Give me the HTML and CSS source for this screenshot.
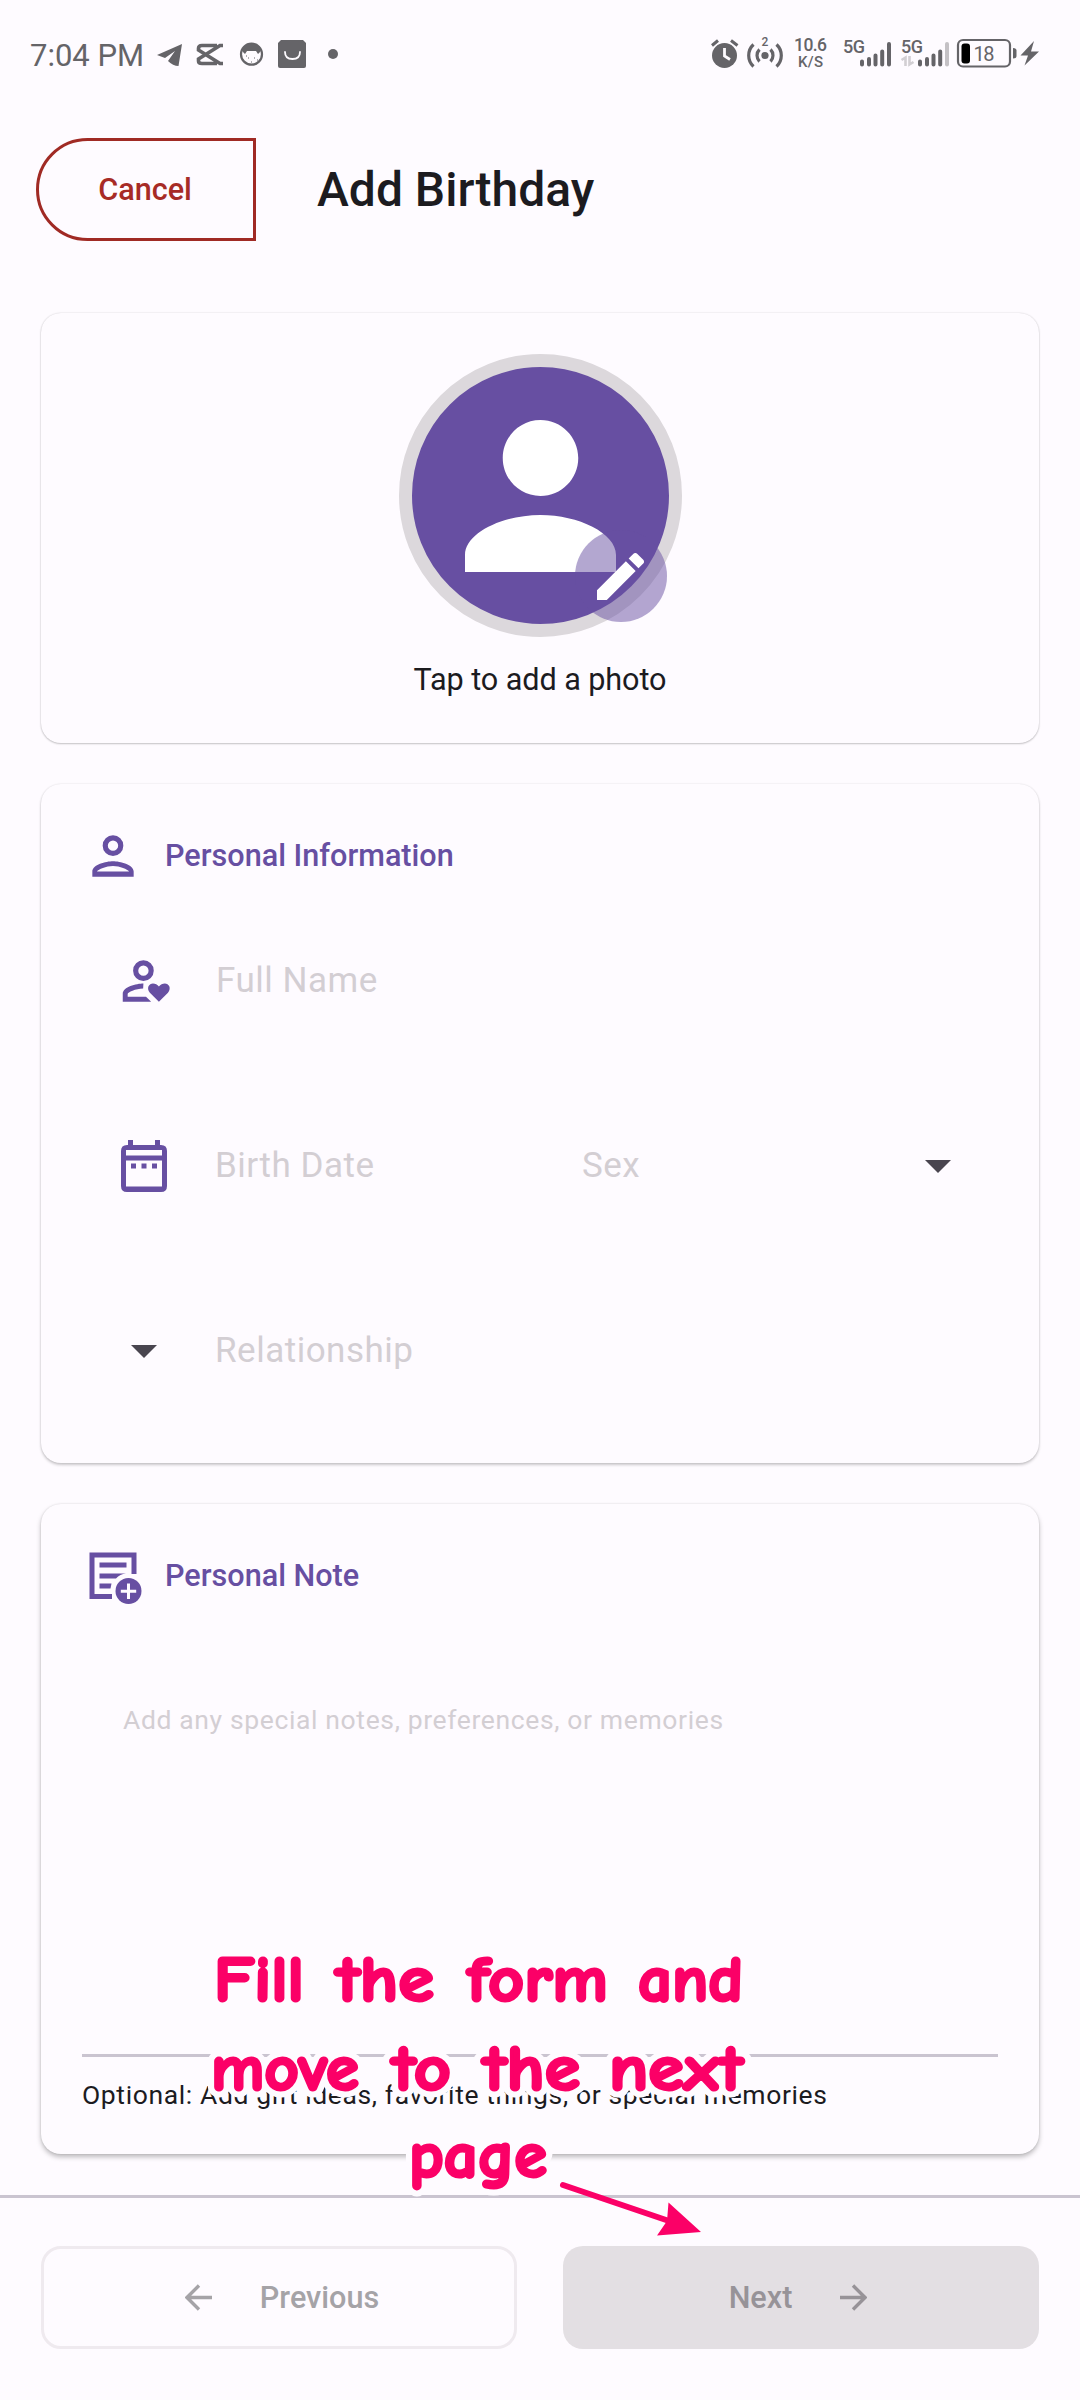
FILE: index.html
```html
<!DOCTYPE html>
<html lang="en">
<head>
<meta charset="utf-8">
<title>Add Birthday</title>
<link rel="stylesheet" href="styles.css">
</head>
<body>
<div class="screen">
  <div class="status">
    <span class="clock">7:04 PM</span>
    <svg class="status-left" width="190" height="36" viewBox="150 34 190 36">
      <path d="M157 54 182 43 178.500 65Q173 65 168 60L175 50 165 57Z"/>
      <path d="M217 44.500H202Q198.500 44.500 198.500 47.500V49L220 62.500H223M223 44.500H220L198.500 58V60Q198.500 62.500 202 62.500H217" fill="none" stroke="currentColor" stroke-width="3.600"/>
      <circle cx="251.500" cy="53.200" r="10.500" fill="none" stroke="currentColor" stroke-width="2.200"/>
      <path d="M242 50Q243 43 251.500 42.500 260 43 261 50L258 53 256 50H247L245 53Z"/>
      <path d="M248 57h1M254 57h1M251 61h1M246 55h1M257 59h1" stroke="currentColor"/>
      <path d="M281 39h22l3 3V65q0 2-2 2H280q-2 0-2-2V42Z"/>
      <path d="M285 51q0 7 7.500 7t7.500-7" fill="none" stroke="#fefbff" stroke-width="1.800" stroke-linecap="round"/>
      <circle cx="333" cy="53" r="5"/>
    </svg>
    <svg class="status-right" width="340" height="44" viewBox="705 31 340 44">
      <circle cx="724.500" cy="55.500" r="12.500"/>
      <path d="M712 45.500 718 40.500M731 40.500 737.500 45.500" stroke="currentColor" stroke-width="3"/>
      <path d="M724.500 48V56L730 59.500" fill="none" stroke="#fefbff" stroke-width="2.800"/>
      <circle cx="765" cy="55.500" r="3.600"/>
      <path d="M759.500 49.500a8.500 8.500 0 0 0 0 12M770.500 49.500a8.500 8.500 0 0 1 0 12M753.500 44.500a15 15 0 0 0 0 22M776.500 44.500a15 15 0 0 1 0 22" fill="none" stroke="currentColor" stroke-width="3.200"/>
      <text x="765" y="46" font-size="12" text-anchor="middle" font-weight="500">2</text>
      <text x="810.500" y="50.500" font-size="17.500" text-anchor="middle" font-weight="500" textLength="33">10.6</text>
      <text x="810.500" y="66.500" font-size="15" text-anchor="middle" font-weight="500" textLength="25">K/S</text>
      <text x="843" y="53" font-size="18" font-weight="500" textLength="22">5G</text>
      <text x="901" y="53" font-size="18" font-weight="500" textLength="22">5G</text>
      <path d="M862 61.500V64.500M869 59V64.500M875.500 55.500V64.500M882.200 51.500V64.500M889 44V64.500M920 61.500V64.500M927 59V64.500M933.500 55.500V64.500M940.200 51.500V64.500" stroke="currentColor" stroke-width="4" stroke-linecap="round"/>
      <path d="M947 44V64.500" stroke="#c4c1c5" stroke-width="4" stroke-linecap="round"/>
      <path d="M901.500 60 905.500 57.500V66M909.500 56V64.500L913.500 62" fill="none" stroke="#d2cfd3" stroke-width="2.600"/>
      <rect x="958" y="40" width="52" height="26.500" rx="5" fill="none" stroke="currentColor" stroke-width="2.200"/>
      <rect x="961.500" y="43.500" width="8.500" height="20" rx="3" fill="#000"/>
      <text x="973.500" y="60.500" font-size="20" textLength="21">18</text>
      <path d="M1013 48Q1016.500 48 1016.500 50.500V56Q1016.500 58.500 1013 58.500Z"/>
      <path d="M1034 41 1020.500 55.500H1028L1024.500 65.500 1039 51.500H1031Z"/>
    </svg>
  </div>

  <header class="appbar">
    <button class="cancel">Cancel</button>
    <h1 class="title">Add Birthday</h1>
  </header>

  <main class="cards">
    <section class="card photo">
      <div class="avatar">
        <svg class="avatar-person" viewBox="4 4 16 16" preserveAspectRatio="none"><path d="M12 12c2.210 0 4-1.790 4-4s-1.790-4-4-4-4 1.790-4 4 1.790 4 4 4zm0 2c-4 0-8 1.900-8 4.200V20h16v-1.800c0-2.300-4-4.200-8-4.200z"/></svg>
        <div class="badge">
          <svg class="pencil" viewBox="3 3 18 18"><path d="M3 17.250V21h3.750L17.810 9.940l-3.750-3.750L3 17.250zM20.710 7.040c.39-.39.39-1.020 0-1.410l-2.340-2.340c-.39-.39-1.020-.39-1.410 0l-1.830 1.830 3.750 3.750 1.830-1.830z"/></svg>
        </div>
      </div>
      <p class="photo-label">Tap to add a photo</p>
    </section>

    <section class="card info">
      <h2 class="heading">
        <svg class="heading-icon" viewBox="0 0 24 24"><path d="M12 4a4 4 0 1 0 0 8 4 4 0 0 0 0-8zm0 2a2 2 0 1 1 0 4 2 2 0 0 1 0-4zM12 14c-2.700 0-8 1.300-8 4v2h16v-2c0-2.700-5.300-4-8-4zm-6.200 4c.6-.8 3.500-2.100 6.200-2.100s5.600 1.300 6.200 2.100z" fill-rule="evenodd"/></svg>
        <span>Personal Information</span>
      </h2>
      <div class="field name-field">
        <svg class="field-icon" viewBox="0 0 24 24"><path d="M11 4a4 4 0 1 0 0 8 4 4 0 0 0 0-8zm0 2a2 2 0 1 1 0 4 2 2 0 0 1 0-4zM11 13c-2.700 0-8 1.300-8 4v3h11l-2-1.900H4.900V17c0-.6 3.100-2.100 6-2.100zM17 20l-3.500-3.500c-1.500-1.700-.3-3.500 1.200-3.500.9 0 1.700.4 2.300 1.100.6-.7 1.400-1.100 2.300-1.100 1.500 0 2.700 1.800 1.200 3.500z" fill-rule="evenodd"/></svg>
        <span>Full Name</span>
      </div>
      <div class="pair">
        <div class="field">
          <svg class="field-icon calendar" viewBox="0 0 46 52"><path d="M7 0h5v5h22V0h5v5h1q6 0 6 6v35q0 6-6 6H6q-6 0-6-6V11Q0 5 6 5h1zM5 10v5.500h36V10zM5 20.500v26h36v-26zM10 23.500h5v5h-5zM20.500 23.500h5v5h-5zM31 23.500h5v5h-5z" fill-rule="evenodd"/></svg>
          <span>Birth Date</span>
        </div>
        <div class="field select">
          <span>Sex</span>
          <svg class="caret" viewBox="0 0 26 13"><path d="M0 0H26L13 13Z"/></svg>
        </div>
      </div>
      <div class="field">
        <svg class="caret lead" viewBox="0 0 26 13"><path d="M0 0H26L13 13Z"/></svg>
        <span>Relationship</span>
      </div>
    </section>

    <section class="card note">
      <h2 class="heading">
        <svg class="note-icon" viewBox="89 1552 53 52"><path fill-rule="evenodd" d="M89.500 1552.500H136.500V1574H131.500V1557.500H94.500V1594H112V1599H89.500Z"/><path d="M99.500 1562.500H126.500V1567.500H99.500ZM99.500 1573.500H126Q120 1574 116 1578.500H99.500ZM99.500 1583.500H111.500L110.500 1588.500H99.500Z"/><circle cx="128.500" cy="1591" r="13"/><path d="M128.500 1583.500V1599M120.800 1591.300H136.200" stroke="#fefbff" stroke-width="3"/></svg>
        <span>Personal Note</span>
      </h2>
      <div class="note-input">Add any special notes, preferences, or memories</div>
      <p class="hint">Optional: Add gift ideas, favorite things, or special memories</p>
    </section>
  </main>

  <footer class="actions">
    <button class="action previous">
      <svg class="arrow" viewBox="0 0 27 27"><path d="M27 13.500H2.500M14 1.500 2 13.500 14 25.500"/></svg>
      <span>Previous</span>
    </button>
    <button class="action next">
      <span>Next</span>
      <svg class="arrow" viewBox="0 0 27 27"><path d="M0 13.500H24.500M13 1.500 25 13.500 13 25.500"/></svg>
    </button>
  </footer>

  <svg class="annotation" viewBox="190 1930 580 330">
    <use href="#caption" class="halo"/>
    <g class="ink">
      <g id="caption">
        <text y="2001"><tspan x="214" textLength="90" lengthAdjust="spacingAndGlyphs">Fill</tspan> <tspan x="336" textLength="98" lengthAdjust="spacingAndGlyphs">the</tspan> <tspan x="467" textLength="141" lengthAdjust="spacingAndGlyphs">form</tspan> <tspan x="638" textLength="105" lengthAdjust="spacingAndGlyphs">and</tspan></text>
        <text y="2090"><tspan x="211" textLength="148" lengthAdjust="spacingAndGlyphs">move</tspan> <tspan x="392" textLength="59" lengthAdjust="spacingAndGlyphs">to</tspan> <tspan x="483" textLength="97" lengthAdjust="spacingAndGlyphs">the</tspan> <tspan x="609" textLength="134" lengthAdjust="spacingAndGlyphs">next</tspan></text>
        <text y="2177"><tspan x="409" textLength="138" lengthAdjust="spacingAndGlyphs">page</tspan></text>
      </g>
    </g>
    <path class="pointer-line" d="M563 2185 672 2222"/>
    <path class="pointer-head" d="M668.500 2202.500 701 2232 657 2235.500 667 2221Z"/>
  </svg>
</div>
</body>
</html>
```
FILE: styles.css
```css
* { box-sizing: border-box; }

body {
  margin: 0;
  background: #fefbff;
  font-family: Roboto, sans-serif;
  color: #1c1b1f;
}

h1, h2, p { margin: 0; }

button { font-family: inherit; }

svg { display: block; fill: currentColor; flex: none; }

.screen {
  position: relative;
  width: 1080px;
  height: 2400px;
  display: flex;
  flex-direction: column;
  overflow: hidden;
}

.status {
  height: 108px;
  display: flex;
  align-items: center;
  padding: 0 35px 2px 30px;
  color: #656468;
}

.clock {
  width: 120px;
  font-size: 31px;
  white-space: nowrap;
  padding-top: 4px;
}

.status-right { margin-left: auto; }

.appbar {
  height: 163px;
  padding: 30px 36px 0;
  display: flex;
  align-items: flex-start;
  gap: 61px;
}

.cancel {
  width: 220px;
  height: 103px;
  border: 3px solid #a02a24;
  border-radius: 52px 0 0 52px;
  background: transparent;
  color: #a72b26;
  font-size: 30.600px;
  font-weight: 500;
  padding: 0 2px 0 0;
}

.title {
  font-size: 48px;
  line-height: 103px;
  font-weight: 500;
}

.cards {
  padding: 42px 41px 0;
  display: flex;
  flex-direction: column;
  gap: 41px;
}

.card {
  border-radius: 20px;
  background: #fefbff;
  box-shadow: 0 2px 3px rgba(0, 0, 0, .2), 0 0 2px rgba(0, 0, 0, .12);
}

.photo {
  height: 430px;
  padding-top: 41px;
  display: flex;
  flex-direction: column;
  align-items: center;
  box-shadow: 0 1px 2px rgba(0, 0, 0, .2), 0 0 2px rgba(0, 0, 0, .14);
}

.avatar {
  position: relative;
  width: 283px;
  height: 283px;
  border: 13px solid #dcd8dc;
  border-radius: 50%;
  background: #674fa2;
  display: flex;
  justify-content: center;
  padding: 53px 0 0 1px;
}

.avatar-person { width: 151px; height: 152px; color: #fff; }

.badge {
  position: absolute;
  left: 163px;
  top: 163px;
  width: 92px;
  height: 92px;
  border-radius: 50%;
  background: rgba(103, 79, 162, .5);
  display: flex;
  align-items: center;
  justify-content: center;
}

.pencil { width: 47px; height: 47px; color: #fff; }

.photo-label { font-size: 30.600px; line-height: 40px; margin-top: 23px; letter-spacing: -.08px; }

.info { height: 679px; }

.heading {
  height: 144px;
  padding-left: 41px;
  display: flex;
  align-items: center;
  font-size: 30.600px;
  font-weight: 500;
  color: #674fa2;
}

.heading span { padding-bottom: 2px; }

.heading-icon { width: 62px; height: 62px; margin-right: 21px; }

.note-icon { width: 53px; height: 52px; margin: 4px 23px 0 7px; }

.field {
  height: 185px;
  padding-left: 73px;
  display: flex;
  align-items: flex-start;
  font-size: 35px;
  line-height: 42px;
  letter-spacing: .5px;
  color: #d3ced3;
}

.info .field span { flex: none; padding-top: 1px; }

.field-icon {
  width: 62px;
  height: 62px;
  margin: -9px 39px 0 1px;
  color: #674fa2;
}

.pair { display: flex; margin-top: 31px; }

.name-field { padding-top: 31px; }

.calendar { width: 46px; height: 52px; margin: -4px 48px 0 7px; }

.pair .field { width: 500px; }

.pair .select {
  padding: 0 88px 0 41px;
  width: 498px;
  justify-content: space-between;
}

.caret { width: 26px; height: 13px; margin-top: 16px; color: #49454f; }

.lead { margin: 16px 58px 0 17px; }

.note { height: 650px; box-shadow: 0 3px 5px rgba(0, 0, 0, .26), 0 0 2px rgba(0, 0, 0, .12); }

.note-input {
  height: 409px;
  margin: 0 41px;
  padding: 56px 0 0 41px;
  border-bottom: 3px solid #cac4d0;
  font-size: 26.500px;
  line-height: 32px;
  letter-spacing: .63px;
  color: #d3ced3;
}

.hint {
  margin: 20px 0 0 41px;
  font-size: 26.500px;
  line-height: 36px;
  letter-spacing: .62px;
}

.actions {
  margin-top: 41px;
  height: 205px;
  border-top: 3px solid #cac4d0;
  padding: 48px 41px 0;
  display: flex;
  gap: 46px;
}

.action {
  flex: none;
  width: 476px;
  height: 103px;
  border-radius: 20px;
  display: flex;
  align-items: center;
  justify-content: center;
  gap: 48px;
  font-size: 30.600px;
  font-weight: 500;
}

.previous {
  border: 3px solid #efeaef;
  background: transparent;
  color: #a5a3a7;
  padding: 0 0 0 6px;
}

.next {
  border: 0;
  background: #e3dfe3;
  color: #979398;
  padding: 0 6px 0 0;
}

.arrow {
  width: 27px;
  height: 27px;
  fill: none;
  stroke: currentColor;
  stroke-width: 3.400;
}

.annotation {
  position: absolute;
  left: 190px;
  top: 1930px;
  width: 580px;
  height: 330px;
  font-family: "Comic Sans MS", "Comic Neue", Inter, sans-serif;
  font-size: 65px;
  font-weight: 600;
  font-feature-settings: "cv11";
  stroke-linejoin: round;
  stroke-linecap: round;
}

.ink { fill: #fb0067; stroke: #fb0067; stroke-width: 3px; }

.halo { fill: #fefbff; stroke: #fefbff; stroke-width: 15px; }

.pointer-line { stroke: #fb0067; stroke-width: 6px; }

.pointer-head { fill: #fb0067; }
```
